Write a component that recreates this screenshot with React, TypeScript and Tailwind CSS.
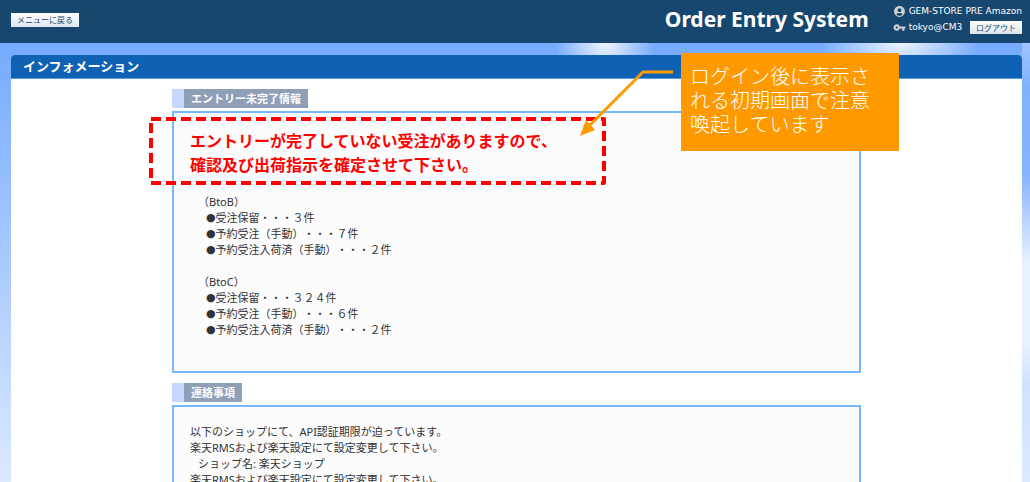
import { MdAccountCircle, MdVpnKey } from "react-icons/md";

const ENTRY_GROUPS = [
  {
    name: "（BtoB）",
    items: ["受注保留・・・３件", "予約受注（手動）・・・７件", "予約受注入荷済（手動）・・・２件"],
  },
  {
    name: "（BtoC）",
    items: ["受注保留・・・３２４件", "予約受注（手動）・・・６件", "予約受注入荷済（手動）・・・２件"],
  },
];

function SectionTitle({ children }: { children: string }) {
  return (
    <h2 className="mb-[3px] h-[19px] w-fit border-l-12 border-[#c6d8ff] bg-[#8f9fb8] px-[7px] text-[11px] leading-[19px] font-bold text-white">
      {children}
    </h2>
  );
}

function Header() {
  return (
    <header className="flex h-[43px] items-center bg-[#17466e] pr-2 pl-[11px]">
      <button
        type="button"
        className="mb-1 h-[14px] w-[68px] bg-linear-to-b from-white to-[#dde6f0] text-[8px] leading-[14px] text-[#17466e]"
      >
        メニューに戻る
      </button>
      <h1 className="mb-1 ml-auto text-[21px] font-bold text-white">Order Entry System</h1>
      <div className="mb-1 ml-6 flex flex-col gap-px font-['DejaVu_Sans',sans-serif] text-[9px] leading-[15px] text-white">
        <div className="flex items-center gap-[3px]">
          <MdAccountCircle className="size-[13px] text-[#d0d0d0]" />
          <span>GEM-STORE PRE Amazon</span>
        </div>
        <div className="flex items-center gap-[3px]">
          <MdVpnKey className="size-[13px] text-[#d0d0d0]" />
          <span>tokyo@CM3</span>
          <button
            type="button"
            className="ml-auto h-[13px] w-[52px] bg-linear-to-b from-white to-[#dde6f0] font-['Noto_Sans_CJK_JP',sans-serif] text-[8px] leading-[13px] text-[#17466e]"
          >
            ログアウト
          </button>
        </div>
      </div>
    </header>
  );
}

function Callout() {
  return (
    <>
      <svg
        className="pointer-events-none absolute -top-9 -left-6 overflow-visible"
        width="540"
        height="140"
        fill="none"
        aria-hidden
      >
        <rect
          x="3"
          y="66"
          width="453"
          height="64"
          stroke="#ff0000"
          strokeWidth="4"
          strokeLinejoin="round"
          strokeDasharray="10 5"
        />
        <path d="M525 19H495L440 74" stroke="#ff9900" strokeWidth="3" />
        <path d="M432 83L438 67L447 77Z" fill="#ff9900" />
      </svg>
      <p className="absolute -top-9 left-[509px] h-[98px] w-[218px] bg-[#ff9900] py-3 pr-6 pl-[9px] text-[20px] leading-6 font-light text-white">
        ログイン後に表示される初期画面で注意喚起しています
      </p>
    </>
  );
}

export default function App() {
  return (
    <div className="flex h-screen flex-col overflow-hidden bg-linear-to-b from-[#6ca4fc] to-[#dce9ff] font-['Noto_Sans','Noto_Sans_CJK_JP',sans-serif] text-[#333333] [text-spacing-trim:space-all]">
      <Header />
      <div className="min-h-0 flex-1 bg-[radial-gradient(ellipse_50px_50px_at_605px_0px,#eef5ff,transparent),radial-gradient(ellipse_80px_40px_at_900px_0px,#eef5ff,transparent),linear-gradient(#a0c4ff,#80b2fc_10%,#86b4fc_30%,#e8f1ff_50%,#e8f1ff_68%,#d0e2ff_78%,#dce9ff)] bg-[size:auto,auto,8px_100%] bg-[position:0_0,0_0,100%_0] bg-no-repeat pt-3 pr-2 pl-[11px]">
        <main className="h-full rounded-t-sm bg-white">
          <h2 className="h-6 rounded-t-sm border-b border-[#5b9be0] bg-[#0f61b3] pl-3 text-[13px] leading-[23px] font-bold text-white">
            インフォメーション
          </h2>
          <div className="mx-[161px] pt-[10px]">
            <section className="relative">
              <SectionTitle>エントリー未完了情報</SectionTitle>
              <div className="h-[262px] border-2 border-[#76b8ff] bg-[#fcfcfc] px-4 pt-4">
                <p className="text-[16px] leading-6 font-bold text-[#ff0000]">
                  エントリーが完了していない受注がありますので、
                  <br />
                  確認及び出荷指示を確定させて下さい。
                </p>
                <div className="mt-[17px] flex flex-col gap-4 pl-2 text-[11px] leading-4">
                  {ENTRY_GROUPS.map((group) => (
                    <div key={group.name}>
                      <h3>{group.name}</h3>
                      <ul className="pl-2">
                        {group.items.map((item) => (
                          <li key={item} className="flex">
                            <span className="font-['DejaVu_Sans',sans-serif]">●</span>
                            {item}
                          </li>
                        ))}
                      </ul>
                    </div>
                  ))}
                </div>
              </div>
              <Callout />
            </section>
            <section className="mt-[10px]">
              <SectionTitle>連絡事項</SectionTitle>
              <div className="h-[262px] border-2 border-[#76b8ff] bg-[#fcfcfc] px-4 pt-[17px] text-[11px] leading-4">
                <p>以下のショップにて、API認証期限が迫っています。</p>
                <p>楽天RMSおよび楽天設定にて設定変更して下さい。</p>
                <p className="pl-2">ショップ名: 楽天ショップ</p>
                <p>楽天RMSおよび楽天設定にて設定変更して下さい。</p>
              </div>
            </section>
          </div>
        </main>
      </div>
    </div>
  );
}
